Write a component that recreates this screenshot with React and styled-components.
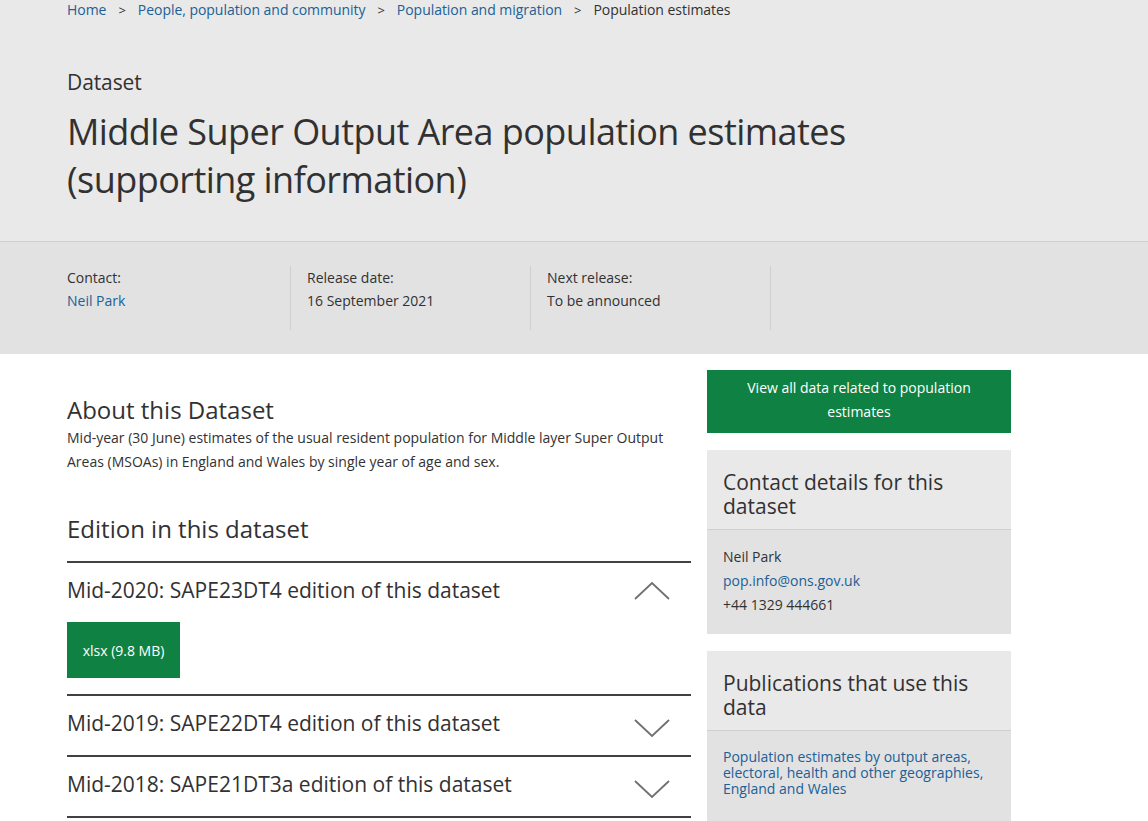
import React from "react";
import styled, { createGlobalStyle } from "styled-components";

const Global = createGlobalStyle`
  html, body { margin: 0; padding: 0; background: #fff; }
  body { font-family: "Open Sans", "Liberation Sans", sans-serif; color: #222; }
  a { color: #206095; text-decoration: none; }
`;

const Page = styled.div`
  width: 1148px;
  min-height: 821px;
  overflow: hidden;
`;

const HeaderBand = styled.header`
  background: #e9e9e9;
  border-bottom: 1px solid #d0d0d0;
  padding: 0 0 0 67px;
  height: 242px;
  box-sizing: border-box;
`;

const Crumbs = styled.nav`
  display: flex;
  align-items: center;
  font-size: 14px;
  line-height: 20px;
  color: #323132;
  letter-spacing: -0.04px;
`;

const Crumb = styled.a`
  color: #206095;
`;

const Sep = styled.span`
  margin: 0 12px;
  color: #323132;
  font-size: 13px;
`;

const Kicker = styled.div`
  font-size: 21px;
  line-height: 28px;
  margin-top: 48px;
  color: #323132;
  letter-spacing: -0.1px;
`;

const Title = styled.h1`
  font-size: 36px;
  font-weight: 400;
  line-height: 48px;
  margin: 12px 0 0 0;
  color: #323132;
  letter-spacing: -0.55px;
  width: 820px;
`;

const MetaBand = styled.section`
  background: #e2e2e3;
  height: 112px;
  box-sizing: border-box;
  padding: 24px 0 0 67px;
  display: flex;
`;

const MetaCol = styled.div`
  width: 223px;
  padding-left: ${(p) => (p.$first ? "0" : "16px")};
  border-right: 1px solid #cfcfcf;
  height: 64px;
  font-size: 14px;
  line-height: 23px;
  color: #323132;
`;

const MetaValue = styled.div`
  color: ${(p) => (p.$link ? "#206095" : "#323132")};
`;

const Body = styled.div`
  display: flex;
  padding-left: 67px;
  gap: 16px;
  padding-top: 16px;
`;

const Main = styled.main`
  width: 624px;
`;

const SectionTitle = styled.h2`
  font-size: 24px;
  font-weight: 400;
  line-height: 32px;
  margin: ${(p) => p.$mt} 0 0 0;
  color: #323132;
`;

const Para = styled.p`
  font-size: 14px;
  line-height: 24px;
  margin: 0;
  color: #323132;
`;

const Accordion = styled.div`
  margin-top: 16px;
  border-top: 2px solid #414042;
`;

const AccItem = styled.div`
  border-bottom: 2px solid #414042;
`;

const AccHead = styled.div`
  display: flex;
  align-items: center;
  justify-content: space-between;
  height: 59px;
  box-sizing: border-box;
  padding-bottom: 5px;
  font-size: 21px;
  color: #323132;
`;

const Chevron = styled.svg`
  width: 36px;
  height: 20px;
  margin-right: 21px;
  margin-top: ${(p) => (p.$up ? "2px" : "9px")};
`;

const AccBody = styled.div`
  padding: 0 0 16px 0;
`;

const Download = styled.a`
  display: inline-flex;
  align-items: center;
  justify-content: center;
  background: #0f8243;
  color: #fff;
  font-size: 14px;
  width: 113px;
  height: 56px;
`;

const Side = styled.aside`
  width: 304px;
  display: flex;
  flex-direction: column;
  gap: 17px;
`;

const GreenButton = styled.a`
  display: block;
  background: #0f8243;
  color: #fff;
  text-align: center;
  font-size: 14px;
  line-height: 24px;
  padding: 6px 30px 9px;
  height: 63px;
  box-sizing: border-box;
`;

const Box = styled.section`
  background: #e2e2e3;
`;

const BoxHead = styled.h3`
  margin: 0;
  background: #e9e9e9;
  border-bottom: 1px solid #cfcfcf;
  font-size: 21px;
  font-weight: 400;
  line-height: 24px;
  color: #323132;
  padding: 20px 16px 10px;
  height: 80px;
  box-sizing: border-box;
`;

const BoxBody = styled.div`
  padding: ${(p) => p.$pad};
  font-size: 14px;
  line-height: ${(p) => p.$lh || "24px"};
  color: #323132;
`;

const Line = styled.div``;

const ChevronIcon = ({ up }) => (
  <Chevron $up={up} viewBox="0 0 36 20">
    <polyline
      points={up ? "1,18 18,2 35,18" : "1,2 18,18 35,2"}
      fill="none"
      stroke="#707071"
      strokeWidth="1.8"
    />
  </Chevron>
);

export default function App() {
  return (
    <Page>
      <Global />
      <HeaderBand>
        <Crumbs>
          <Crumb href="#">Home</Crumb>
          <Sep>&gt;</Sep>
          <Crumb href="#">People, population and community</Crumb>
          <Sep>&gt;</Sep>
          <Crumb href="#">Population and migration</Crumb>
          <Sep>&gt;</Sep>
          <span>Population estimates</span>
        </Crumbs>
        <Kicker>Dataset</Kicker>
        <Title>Middle Super Output Area population estimates (supporting information)</Title>
      </HeaderBand>
      <MetaBand>
        <MetaCol $first>
          <div>Contact:</div>
          <MetaValue $link>Neil Park</MetaValue>
        </MetaCol>
        <MetaCol>
          <div>Release date:</div>
          <MetaValue>16 September 2021</MetaValue>
        </MetaCol>
        <MetaCol>
          <div>Next release:</div>
          <MetaValue>To be announced</MetaValue>
        </MetaCol>
      </MetaBand>
      <Body>
        <Main>
          <SectionTitle $mt="24px">About this Dataset</SectionTitle>
          <Para>
            Mid-year (30 June) estimates of the usual resident population for Middle layer Super Output
            Areas (MSOAs) in England and Wales by single year of age and sex.
          </Para>
          <SectionTitle $mt="39px">Edition in this dataset</SectionTitle>
          <Accordion>
            <AccItem>
              <AccHead>
                <span>Mid-2020: SAPE23DT4 edition of this dataset</span>
                <ChevronIcon up />
              </AccHead>
              <AccBody>
                <Download href="#">xlsx (9.8 MB)</Download>
              </AccBody>
            </AccItem>
            <AccItem>
              <AccHead>
                <span>Mid-2019: SAPE22DT4 edition of this dataset</span>
                <ChevronIcon />
              </AccHead>
            </AccItem>
            <AccItem>
              <AccHead>
                <span>Mid-2018: SAPE21DT3a edition of this dataset</span>
                <ChevronIcon />
              </AccHead>
            </AccItem>
          </Accordion>
        </Main>
        <Side>
          <GreenButton href="#">View all data related to population estimates</GreenButton>
          <Box>
            <BoxHead>Contact details for this dataset</BoxHead>
            <BoxBody $pad="15px 16px 17px">
              <Line>Neil Park</Line>
              <Line>
                <a href="#">pop.info@ons.gov.uk</a>
              </Line>
              <Line>+44 1329 444661</Line>
            </BoxBody>
          </Box>
          <Box>
            <BoxHead>Publications that use this data</BoxHead>
            <BoxBody $pad="18px 16px 24px" $lh="16px">
              <a href="#">
                Population estimates by output areas, electoral, health and other geographies, England and
                Wales
              </a>
            </BoxBody>
          </Box>
        </Side>
      </Body>
    </Page>
  );
}
